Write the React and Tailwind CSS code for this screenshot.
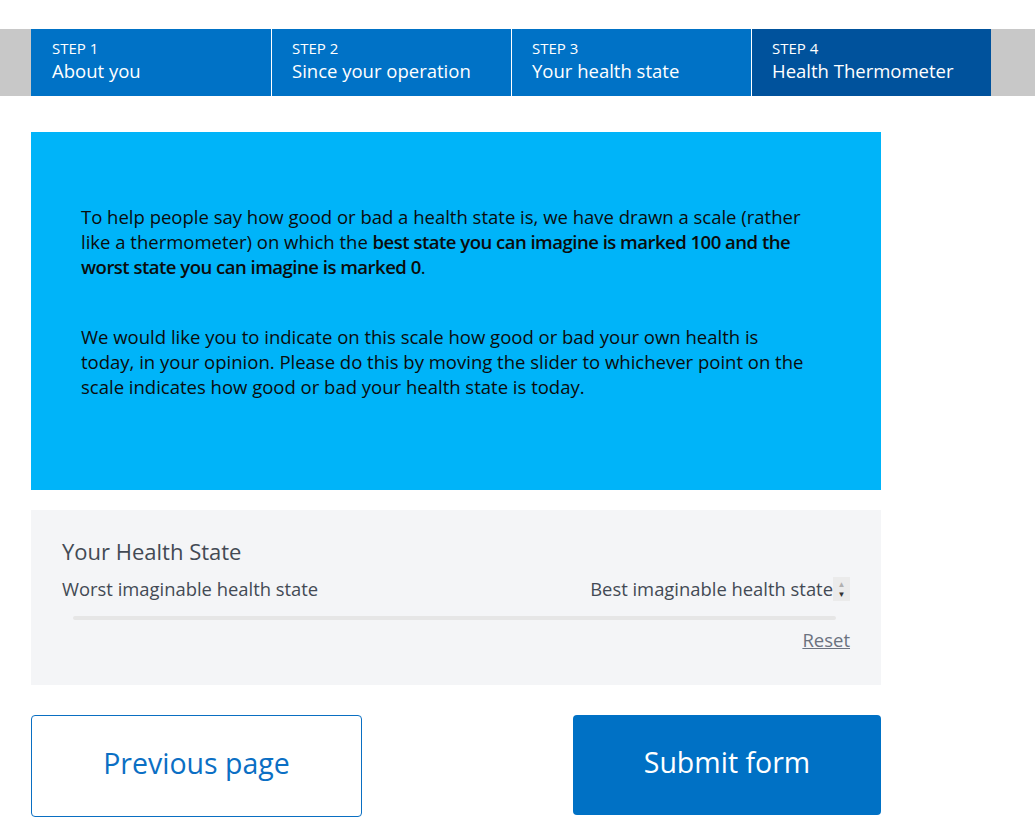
export default function App() {
  const steps = [
    ["STEP 1", "About you", false],
    ["STEP 2", "Since your operation", false],
    ["STEP 3", "Your health state", false],
    ["STEP 4", "Health Thermometer", true],
  ];
  return (
    <div className="min-h-[831px] bg-white pt-[29px] font-['Open_Sans',sans-serif] text-[#0b0c0c]">
      <nav className="flex h-[67px] bg-[#c8c8c8] pl-[31px]">
        {steps.map(([n, label, active]) => (
          <div
            key={n}
            className={`flex w-[240px] flex-col border-l border-white px-5 pt-[9px] text-white first:border-l-0 first:pl-[21px] ${
              active ? "bg-[#00529c]" : "bg-[#0072c6]"
            }`}
          >
            <span className="text-[15px] leading-5">{n}</span>
            <span className="text-[18.5px] leading-[26px]">{label}</span>
          </div>
        ))}
      </nav>

      <main className="ml-[31px] w-[850px] pt-9">
        <section className="h-[358px] bg-[#00b4f9] pl-[50px] pr-[72px] pt-[72px] text-[18.5px] leading-[25px]">
          <p>
            To help people say how good or bad a health state is, we have drawn a scale (rather like a
            thermometer) on which the{" "}
            <b className="font-semibold tracking-[-0.5px]">
              best state you can imagine is marked 100 and the worst state you can imagine is marked 0
            </b>
            .
          </p>
          <p className="mt-[45px]">
            We would like you to indicate on this scale how good or bad your own health is today, in your
            opinion. Please do this by moving the slider to whichever point on the scale indicates how good or
            bad your health state is today.
          </p>
        </section>

        <section className="mt-5 h-[175px] bg-[#f4f5f7] px-[31px] pt-[27px] text-[#434a54]">
          <h2 className="text-[22px] leading-7">Your Health State</h2>
          <div className="mt-3 flex items-center justify-between text-[18.4px] leading-6">
            <span>Worst imaginable health state</span>
            <span className="flex items-center">
              Best imaginable health state
              <span className="flex h-6 w-[17px] flex-col items-center justify-center gap-[2px] bg-[#ebebeb] text-[8px] leading-[8px]">
                <span className="text-[#b0b0b0]">▲</span>
                <span className="text-[#333]">▼</span>
              </span>
            </span>
          </div>
          <div className="ml-[11px] mr-[14px] mt-[15px] h-1 rounded-full bg-[#e6e6e6]" />
          <div className="mt-[8px] flex justify-end">
            <a href="#" className="text-[18.5px] leading-6 text-[#6b7280] underline">Reset</a>
          </div>
        </section>

        <div className="mt-[30px] flex items-start justify-between">
          <button className="h-[102px] w-[331px] rounded border border-[#0a6fc2] bg-white pb-[6px] text-[28.5px] text-[#0b6fc4]">
            Previous page
          </button>
          <button className="h-[100px] w-[308px] rounded bg-[#0071c5] pb-[6px] text-[28.5px] text-white">
            Submit form
          </button>
        </div>
      </main>
    </div>
  );
}
